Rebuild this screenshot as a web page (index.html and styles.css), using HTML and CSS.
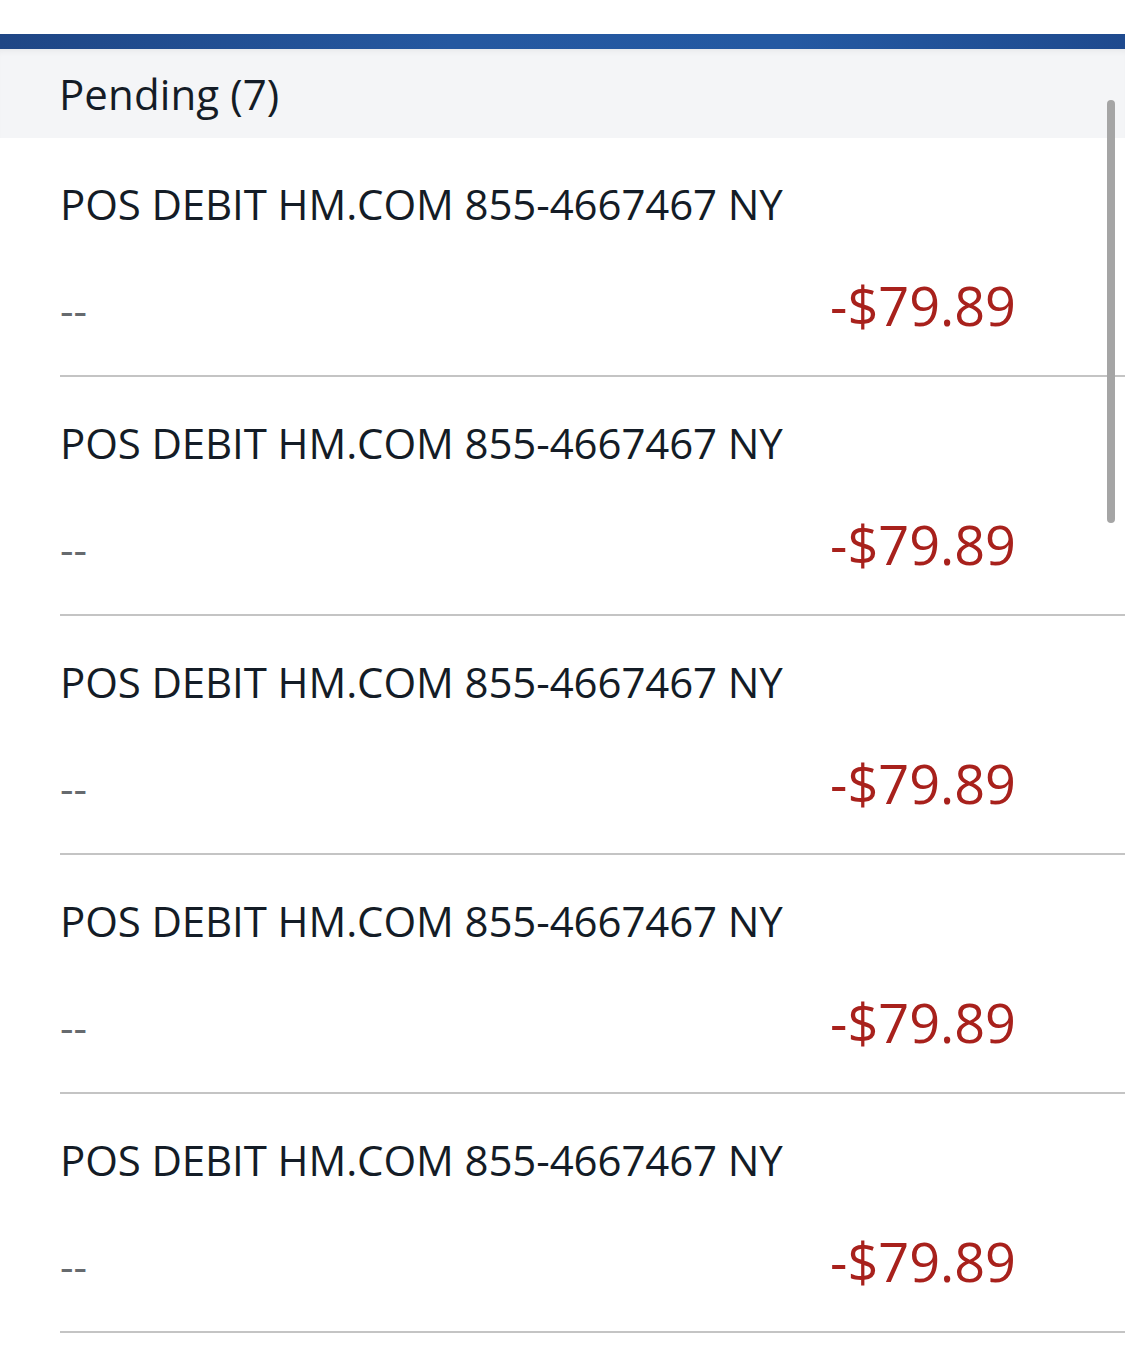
FILE: index.html
```html
<!DOCTYPE html>
<html lang="en">
<head>
<meta charset="utf-8">
<title>Pending transactions</title>
<link rel="stylesheet" href="styles.css">
</head>
<body>
<div class="page">
  <div class="topspace"></div>
  <div class="brandbar"></div>
  <div class="section-head">Pending (7)</div>
  <ul class="txlist">
    <li class="tx">
      <div class="tx-title">POS DEBIT HM.COM 855-4667467 NY</div>
      <div class="tx-meta"><span class="tx-date">--</span><span class="tx-amount">-$79.89</span></div>
    </li>
    <li class="tx">
      <div class="tx-title">POS DEBIT HM.COM 855-4667467 NY</div>
      <div class="tx-meta"><span class="tx-date">--</span><span class="tx-amount">-$79.89</span></div>
    </li>
    <li class="tx">
      <div class="tx-title">POS DEBIT HM.COM 855-4667467 NY</div>
      <div class="tx-meta"><span class="tx-date">--</span><span class="tx-amount">-$79.89</span></div>
    </li>
    <li class="tx">
      <div class="tx-title">POS DEBIT HM.COM 855-4667467 NY</div>
      <div class="tx-meta"><span class="tx-date">--</span><span class="tx-amount">-$79.89</span></div>
    </li>
    <li class="tx">
      <div class="tx-title">POS DEBIT HM.COM 855-4667467 NY</div>
      <div class="tx-meta"><span class="tx-date">--</span><span class="tx-amount">-$79.89</span></div>
    </li>
  </ul>
  <div class="scrollbar"></div>
</div>
</body>
</html>
```
FILE: styles.css
```css
html, body {
  margin: 0;
  padding: 0;
  background: #ffffff;
}
body {
  font-family: "Open Sans", "Noto Sans", sans-serif;
  color: #141c26;
  overflow: hidden;
}
.page {
  position: relative;
  width: 1125px;
  height: 1348px;
  overflow: hidden;
}
.topspace {
  height: 34px;
}
.brandbar {
  height: 15px;
  background: linear-gradient(90deg, #1f4685 0%, #2558a0 40%, #2459a2 70%, #1f4a8e 100%);
}
.section-head {
  height: 89px;
  box-sizing: border-box;
  padding: 16px 0 0 59px;
  background: #f4f5f7;
  box-shadow: inset 0 6px 6px -4px rgba(0, 0, 0, 0.06);
  font-size: 42px;
  line-height: 57px;
  letter-spacing: 0.1px;
}
.txlist {
  list-style: none;
  margin: 0;
  padding: 0;
}
.tx {
  margin-left: 60px;
  height: 239px;
  box-sizing: border-box;
  padding: 37px 109px 0 0;
  border-bottom: 2px solid #c4c4c4;
}
.tx-title {
  font-size: 42px;
  line-height: 57px;
  letter-spacing: -0.1px;
}
.tx-meta {
  margin-top: 37px;
  display: flex;
  justify-content: space-between;
  align-items: baseline;
}
.tx-date {
  font-size: 42px;
  line-height: 72px;
  color: #666a6e;
}
.tx-amount {
  font-size: 54px;
  line-height: 72px;
  color: #a8211c;
}
.scrollbar {
  position: absolute;
  top: 100px;
  right: 10px;
  width: 8px;
  height: 423px;
  border-radius: 4px;
  background: #a5a5a5;
}
```
